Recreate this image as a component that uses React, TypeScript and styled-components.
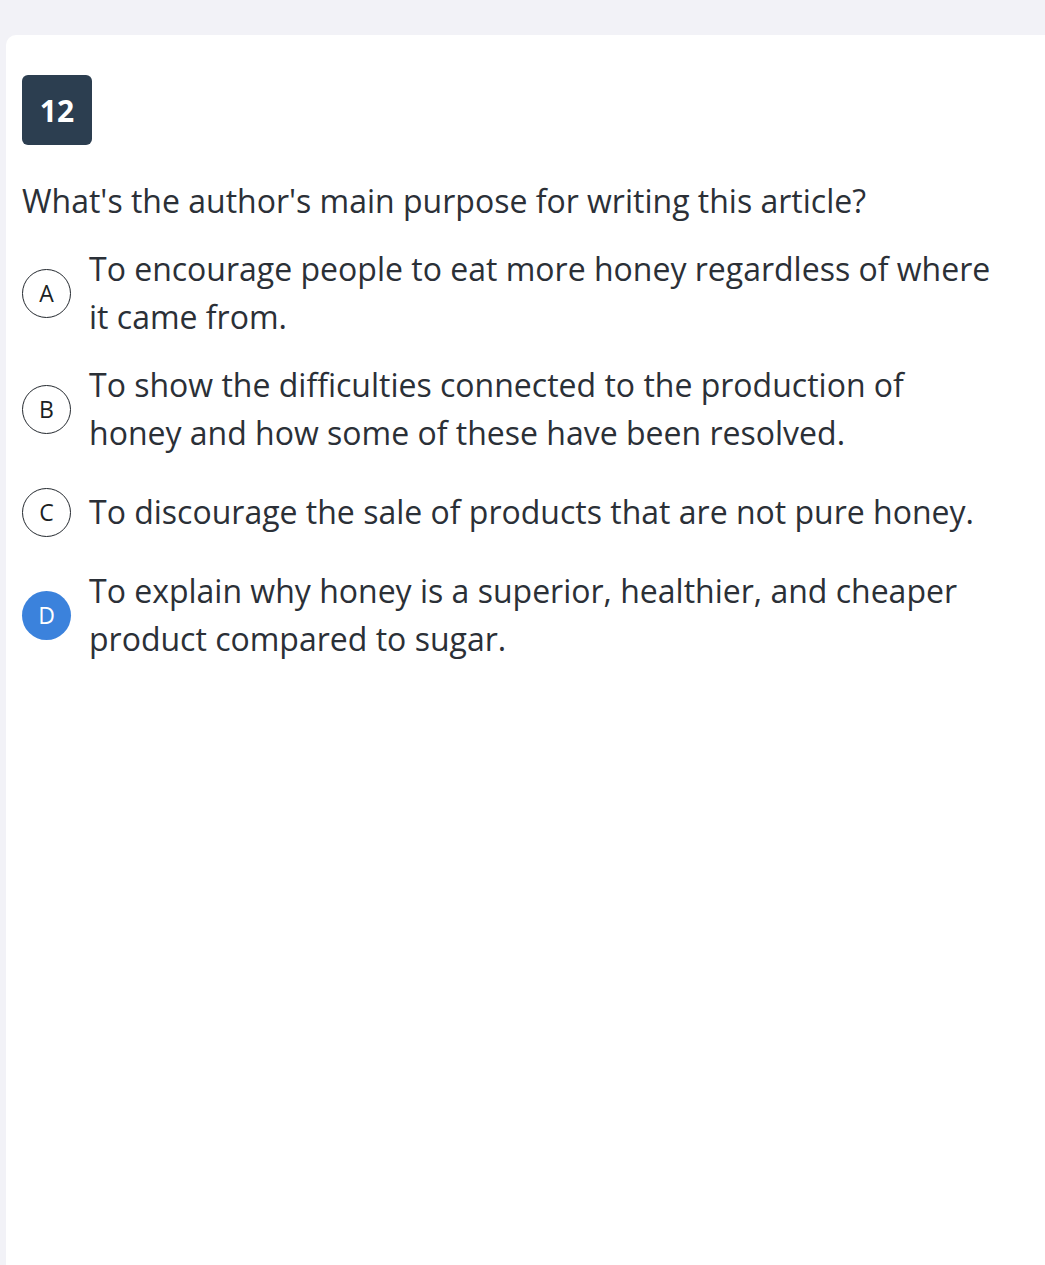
import React from "react";
import styled, { createGlobalStyle } from "styled-components";

const Global = createGlobalStyle`
  html, body { margin: 0; padding: 0; background: #f2f2f7; }
  body { font-family: "Open Sans", "Noto Sans", sans-serif; }
`;

const Page = styled.div`
  min-height: 1265px;
  padding: 35px 0 0 6px;
  box-sizing: border-box;
  overflow: hidden;
`;

const Card = styled.div`
  background: #ffffff;
  border-radius: 10px 0 0 0;
  min-height: 1230px;
  padding: 40px 46px 0 16px;
  box-sizing: border-box;
`;

const Badge = styled.div`
  width: 70px;
  height: 70px;
  border-radius: 6px;
  background: #2c3e50;
  color: #ffffff;
  font-weight: 700;
  font-size: 30px;
  display: flex;
  align-items: center;
  justify-content: center;
`;

const Question = styled.div`
  margin-top: 36px;
  font-size: 32px;
  line-height: 40px;
  color: #2b3037;
`;

const Options = styled.div`
  margin-top: 24px;
  display: flex;
  flex-direction: column;
  gap: 20px;
`;

const Option = styled.div`
  display: flex;
  align-items: center;
  gap: 18px;
  min-height: 70px;
`;

const Circle = styled.div<{ $selected?: boolean }>`
  flex: 0 0 auto;
  width: 49px;
  height: 49px;
  border-radius: 50%;
  box-sizing: border-box;
  border: ${(p) => (p.$selected ? "none" : "1.6px solid #24292f")};
  background: ${(p) => (p.$selected ? "#3b82dc" : "#ffffff")};
  color: ${(p) => (p.$selected ? "#ffffff" : "#1b1f24")};
  font-size: 23px;
  font-weight: 500;
  display: flex;
  align-items: center;
  justify-content: center;
`;

const OptionText = styled.div`
  font-size: 32px;
  line-height: 48px;
  color: #2b3037;
`;

const options = [
  { letter: "A", text: "To encourage people to eat more honey regardless of where it came from." },
  { letter: "B", text: "To show the difficulties connected to the production of honey and how some of these have been resolved." },
  { letter: "C", text: "To discourage the sale of products that are not pure honey." },
  { letter: "D", text: "To explain why honey is a superior, healthier, and cheaper product compared to sugar.", selected: true },
];

export default function App() {
  return (
    <>
      <Global />
      <Page>
        <Card>
          <Badge>12</Badge>
          <Question>What's the author's main purpose for writing this article?</Question>
          <Options>
            {options.map((o) => (
              <Option key={o.letter}>
                <Circle $selected={o.selected}>{o.letter}</Circle>
                <OptionText>{o.text}</OptionText>
              </Option>
            ))}
          </Options>
        </Card>
      </Page>
    </>
  );
}
